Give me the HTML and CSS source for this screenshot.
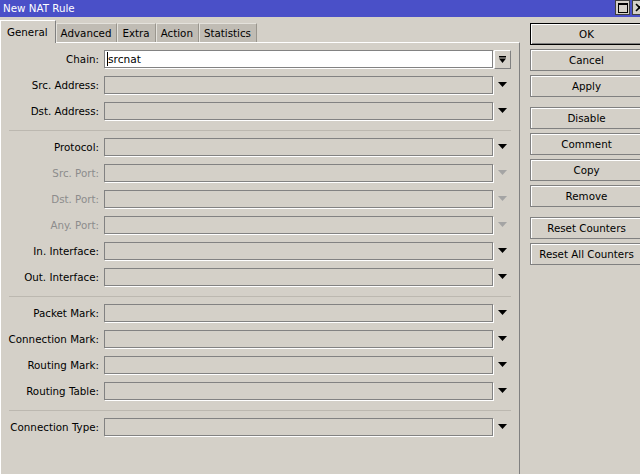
FILE: index.html
```html
<!DOCTYPE html>
<html lang="en">
<head>
  <meta charset="UTF-8" />
  <title>New NAT Rule</title>
  <link rel="stylesheet" href="styles.css">
</head>
<body>
  <div class="window">
    <!-- Title bar -->
    <div class="titlebar">
      <span class="title">New NAT Rule</span>
      <div class="tb-btn tb-max"><span class="max-glyph"></span></div>
      <div class="tb-btn tb-close">
        <svg width="9" height="9" viewBox="0 0 9 9"><path d="M1 1 L8 8 M8 1 L1 8" stroke="#000" stroke-width="1.6"/></svg>
      </div>
    </div>

    <div class="content">
      <!-- Left: tabs and form -->
      <div class="main">
        <div class="tabs">
          <div class="tab active">General</div>
          <div class="tab">Advanced</div>
          <div class="tab">Extra</div>
          <div class="tab">Action</div>
          <div class="tab">Statistics</div>
        </div>

        <div class="panel">
          <div class="row row-chain">
            <label>Chain:</label>
            <div class="field field-edit"><span class="caret"></span>srcnat</div>
            <div class="drop-btn">
              <svg width="9" height="8" viewBox="0 0 9 8"><rect x="1" y="0" width="7" height="1.5" fill="#000"/><polygon points="1,2.5 8,2.5 4.5,7" fill="#000"/></svg>
            </div>
          </div>
          <div class="row">
            <label>Src. Address:</label>
            <div class="field"></div>
            <div class="drop"><svg width="9" height="6" viewBox="0 0 9 6"><polygon points="0,0 9,0 4.5,5" /></svg></div>
          </div>
          <div class="row">
            <label>Dst. Address:</label>
            <div class="field"></div>
            <div class="drop"><svg width="9" height="6" viewBox="0 0 9 6"><polygon points="0,0 9,0 4.5,5" /></svg></div>
          </div>

          <div class="sep"></div>

          <div class="row">
            <label>Protocol:</label>
            <div class="field"></div>
            <div class="drop"><svg width="9" height="6" viewBox="0 0 9 6"><polygon points="0,0 9,0 4.5,5" /></svg></div>
          </div>
          <div class="row disabled">
            <label>Src. Port:</label>
            <div class="field"></div>
            <div class="drop"><svg width="9" height="6" viewBox="0 0 9 6"><polygon points="0,0 9,0 4.5,5" /></svg></div>
          </div>
          <div class="row disabled">
            <label>Dst. Port:</label>
            <div class="field"></div>
            <div class="drop"><svg width="9" height="6" viewBox="0 0 9 6"><polygon points="0,0 9,0 4.5,5" /></svg></div>
          </div>
          <div class="row disabled">
            <label>Any. Port:</label>
            <div class="field"></div>
            <div class="drop"><svg width="9" height="6" viewBox="0 0 9 6"><polygon points="0,0 9,0 4.5,5" /></svg></div>
          </div>
          <div class="row">
            <label>In. Interface:</label>
            <div class="field"></div>
            <div class="drop"><svg width="9" height="6" viewBox="0 0 9 6"><polygon points="0,0 9,0 4.5,5" /></svg></div>
          </div>
          <div class="row">
            <label>Out. Interface:</label>
            <div class="field"></div>
            <div class="drop"><svg width="9" height="6" viewBox="0 0 9 6"><polygon points="0,0 9,0 4.5,5" /></svg></div>
          </div>

          <div class="sep"></div>

          <div class="row">
            <label>Packet Mark:</label>
            <div class="field"></div>
            <div class="drop"><svg width="9" height="6" viewBox="0 0 9 6"><polygon points="0,0 9,0 4.5,5" /></svg></div>
          </div>
          <div class="row">
            <label>Connection Mark:</label>
            <div class="field"></div>
            <div class="drop"><svg width="9" height="6" viewBox="0 0 9 6"><polygon points="0,0 9,0 4.5,5" /></svg></div>
          </div>
          <div class="row">
            <label>Routing Mark:</label>
            <div class="field"></div>
            <div class="drop"><svg width="9" height="6" viewBox="0 0 9 6"><polygon points="0,0 9,0 4.5,5" /></svg></div>
          </div>
          <div class="row">
            <label>Routing Table:</label>
            <div class="field"></div>
            <div class="drop"><svg width="9" height="6" viewBox="0 0 9 6"><polygon points="0,0 9,0 4.5,5" /></svg></div>
          </div>

          <div class="sep"></div>

          <div class="row">
            <label>Connection Type:</label>
            <div class="field"></div>
            <div class="drop"><svg width="9" height="6" viewBox="0 0 9 6"><polygon points="0,0 9,0 4.5,5" /></svg></div>
          </div>
        </div>
      </div>

      <!-- Right: action buttons -->
      <div class="actions">
        <button class="btn btn-default">OK</button>
        <button class="btn">Cancel</button>
        <button class="btn">Apply</button>
        <button class="btn group-start">Disable</button>
        <button class="btn">Comment</button>
        <button class="btn">Copy</button>
        <button class="btn">Remove</button>
        <button class="btn group-start">Reset Counters</button>
        <button class="btn">Reset All Counters</button>
      </div>
    </div>
  </div>
</body>
</html>
```

FILE: styles.css
```css
/*
  Base
*/
* {
  box-sizing: border-box;
  margin: 0;
  padding: 0;
}
html, body {
  width: 640px;
  height: 474px;
  overflow: hidden;
}
body {
  background: #d4d0c8;
  font-family: "DejaVu Sans", Verdana, sans-serif;
  font-size: 10.3px;
  color: #000;
}
.window {
  width: 647px;
}
/*
  Title bar
*/
.titlebar {
  height: 17px;
  background: #4a50c8;
  display: flex;
  align-items: flex-start;
}
.title {
  color: #fff;
  line-height: 17px;
  padding-left: 3px;
  flex: 1;
}
.tb-btn {
  width: 15px;
  height: 15px;
  background: #d4d0c8;
  border: 1px solid #404040;
  display: flex;
  align-items: center;
  justify-content: center;
}
.tb-max {
  margin-right: 2px;
}
.max-glyph {
  width: 10px;
  height: 10px;
  border: 1px solid #000;
  border-top-width: 2px;
}
/*
  Layout
*/
.content {
  display: flex;
  align-items: flex-start;
}
.main {
  width: 520px;
  height: 457px;
  display: flex;
  flex-direction: column;
}
/*
  Tabs
*/
.tabs {
  height: 25px;
  display: flex;
  align-items: flex-end;
}
.tab {
  height: 19px;
  line-height: 19px;
  padding: 0 5px 0 4px;
  background: #c0bcb4;
  border-top: 1px solid #e4e2dc;
  border-left: 1px solid #e4e2dc;
  border-right: 1px solid #9a968e;
}
.tab.active {
  height: 23px;
  line-height: 22px;
  padding: 0 7px 0 6px;
  background: #d4d0c8;
  border-top: 1px solid #fff;
  border-left: 1px solid #fff;
  border-right: 1px solid #808080;
  margin-bottom: -1px;
  position: relative;
  z-index: 1;
}
/*
  Form panel
*/
.panel {
  flex: 1;
  display: flex;
  flex-direction: column;
  border-top: 1px solid #fff;
  border-left: 1px solid #fff;
  border-right: 1px solid #808080;
  padding-top: 7px;
}
.row {
  display: flex;
  align-items: center;
  height: 18px;
  margin-bottom: 8px;
}
.row label {
  width: 98px;
  margin-right: 5px;
  text-align: right;
  white-space: nowrap;
}
.field {
  width: 389px;
  height: 18px;
  border: 1px solid #828282;
  box-shadow: 1px 1px 0 #fff;
}
.field-edit {
  background: #fff;
  padding-left: 2px;
  line-height: 16px;
  display: flex;
  align-items: center;
  font-size: 10.6px;
}
.caret {
  width: 1px;
  height: 14px;
  background: #000;
}
.drop {
  width: 18px;
  display: flex;
  justify-content: center;
  padding-left: 1px;
}
.drop svg {
  fill: #000;
}
.disabled label {
  color: #8c8c8c;
}
.disabled .drop svg {
  fill: #a4a4a4;
}
.drop-btn {
  width: 17px;
  height: 19px;
  margin-left: 1px;
  margin-top: 1px;
  border: 1px solid;
  border-color: #fff #808080 #808080 #fff;
  display: flex;
  align-items: center;
  justify-content: center;
}
.sep {
  margin: 2px 8px 7px 8px;
  border-top: 1px solid #bcb8b0;
}
/*
  Action buttons
*/
.actions {
  padding: 6px 0 0 10px;
  display: flex;
  flex-direction: column;
}
.btn {
  width: 113px;
  height: 22px;
  margin-bottom: 4px;
  font-family: inherit;
  font-size: 10.3px;
  color: #000;
  background: #d4d0c8;
  border: 1px solid #808080;
  box-shadow: inset 1px 1px 0 #fff;
  text-align: center;
}
.btn-default {
  border-color: #000;
  box-shadow: inset 1px 1px 0 #fff, inset -1px -1px 0 #808080;
}
.group-start {
  margin-top: 6px;
}
```
